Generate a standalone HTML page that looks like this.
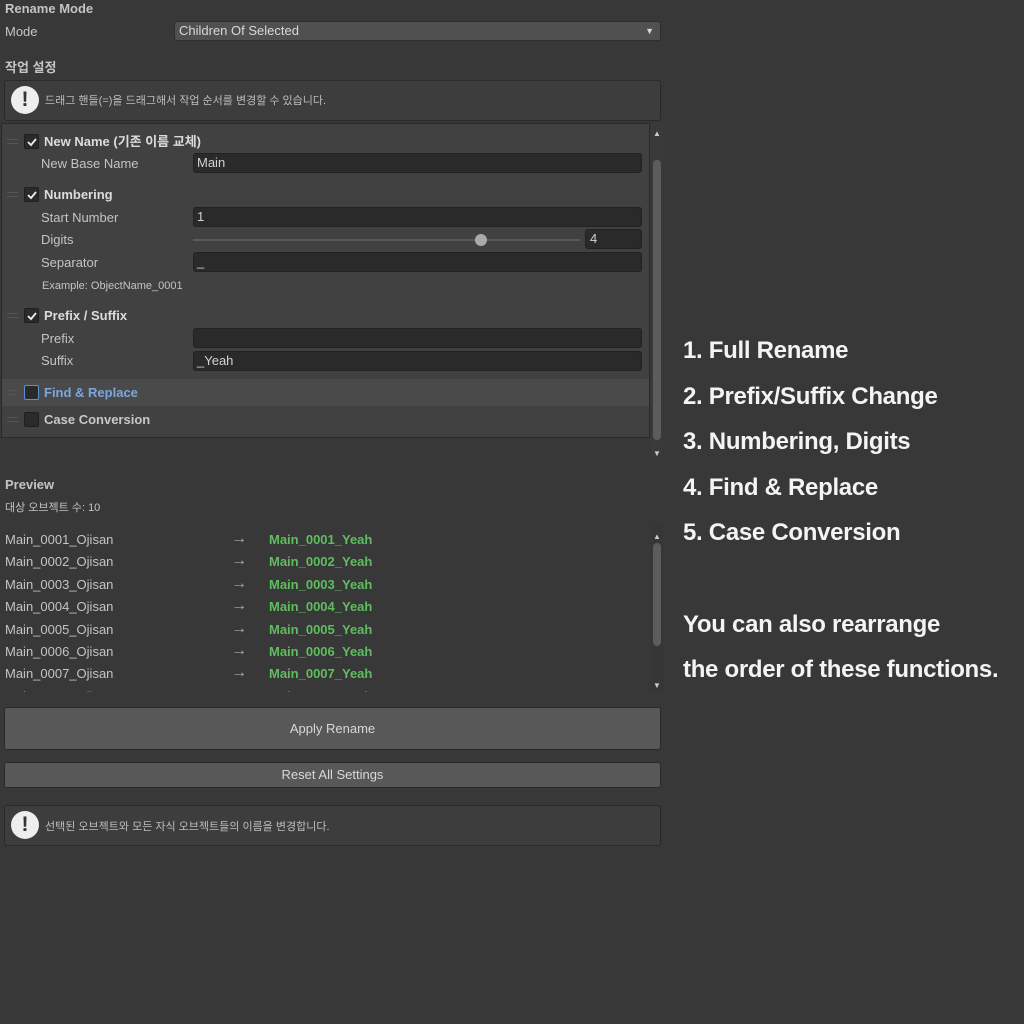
<!DOCTYPE html>
<html><head><meta charset="utf-8"><style>
*{margin:0;padding:0;box-sizing:border-box}
body{width:1024px;height:1024px;background:#383838;font-family:"Liberation Sans","Noto Sans CJK KR",sans-serif;color:#c4c4c4;font-size:13px;line-height:16px;position:relative;overflow:hidden}
.a{position:absolute;white-space:nowrap}
.b{font-weight:bold}
.fld{position:absolute;background:#2a2a2a;border:1px solid #222;border-radius:3px;height:20px;padding-left:3px;line-height:18px;color:#d2d2d2}
.cb{position:absolute;width:15px;height:15px;background:#2a2a2a;border:1px solid #1f1f1f;border-radius:2px}
.cb svg{position:absolute;left:1px;top:1px}
.h{position:absolute;width:11px;height:5px;border-top:1px solid #555;border-bottom:1px solid #555}
.help{position:absolute;left:4px;width:657px;background:#3d3d3d;border:1px solid #2a2a2a;border-radius:3px}
.ic{position:absolute;left:6px;width:28px;height:28px;background:#eee;border-radius:50%}
.ic:after{content:"!";position:absolute;left:0;right:0;top:3px;text-align:center;color:#333;font-weight:bold;font-size:21px;line-height:22px}
.btn{position:absolute;left:4px;width:657px;background:#585858;border:1px solid #2a2a2a;border-radius:3px;text-align:center;color:#d8d8d8}
.r{font-size:24px;line-height:28px;font-weight:bold;color:#f4f4f4;letter-spacing:-0.3px}
.g{color:#5fbd5f;font-weight:bold}
.arr{font-size:16px}
</style></head><body>
<div class="a b" style="left:5px;top:1px">Rename Mode</div>
<div class="a" style="left:5px;top:24px">Mode</div>
<div class="a" style="left:174px;top:21px;width:487px;height:20px;background:#505050;border:1px solid #2e2e2e;border-radius:3px;padding-left:4px;line-height:18px;color:#d8d8d8">Children Of Selected<span style="position:absolute;right:6px;top:0;font-size:9px">▼</span></div>
<div class="a b" style="left:5px;top:60px">작업 설정</div>
<div class="help" style="top:80px;height:41px"><div class="ic" style="top:5px"></div><div class="a" style="left:40px;top:12px;font-size:11px;color:#bdbdbd">드래그 핸들(=)을 드래그해서 작업 순서를 변경할 수 있습니다.</div></div>

<div class="a" style="left:1px;top:123px;width:649px;height:315px;background:#414141;border:1px solid #2a2a2a"></div>
<div class="a" style="left:651px;top:123px;width:12px;height:333px;background:#3a3a3a"></div>
<div class="a" style="left:653px;top:160px;width:8px;height:280px;background:#5c5c5c;border-radius:4px"></div>
<div class="a" style="left:653px;top:126px;font-size:8px;color:#ccc">▲</div>
<div class="a" style="left:653px;top:446px;font-size:8px;color:#ccc">▼</div>

<div class="h" style="left:7px;top:139px"></div>
<div class="cb" style="left:24px;top:134px"><svg width="12" height="12"><path d="M2 6l3 3 5-6" stroke="#eee" stroke-width="1.8" fill="none"/></svg></div>
<div class="a b" style="left:44px;top:134px;color:#dcdcdc">New Name (기존 이름 교체)</div>
<div class="a" style="left:41px;top:156px">New Base Name</div>
<div class="fld" style="left:193px;top:153px;width:449px">Main</div>

<div class="h" style="left:7px;top:192px"></div>
<div class="cb" style="left:24px;top:187px"><svg width="12" height="12"><path d="M2 6l3 3 5-6" stroke="#eee" stroke-width="1.8" fill="none"/></svg></div>
<div class="a b" style="left:44px;top:187px;color:#dcdcdc">Numbering</div>
<div class="a" style="left:41px;top:210px">Start Number</div>
<div class="fld" style="left:193px;top:207px;width:449px">1</div>
<div class="a" style="left:41px;top:232px">Digits</div>
<div class="a" style="left:193px;top:239px;width:387px;height:2px;background:#5a5a5a"></div>
<div class="a" style="left:475px;top:234px;width:12px;height:12px;border-radius:50%;background:#aaa"></div>
<div class="fld" style="left:585px;top:229px;width:57px;padding-left:4px">4</div>
<div class="a" style="left:41px;top:255px">Separator</div>
<div class="fld" style="left:193px;top:252px;width:449px">_</div>
<div class="a" style="left:42px;top:278px;font-size:11px">Example: ObjectName_0001</div>

<div class="h" style="left:7px;top:313px"></div>
<div class="cb" style="left:24px;top:308px"><svg width="12" height="12"><path d="M2 6l3 3 5-6" stroke="#eee" stroke-width="1.8" fill="none"/></svg></div>
<div class="a b" style="left:44px;top:308px;color:#dcdcdc">Prefix / Suffix</div>
<div class="a" style="left:41px;top:331px">Prefix</div>
<div class="fld" style="left:193px;top:328px;width:449px"></div>
<div class="a" style="left:41px;top:353px">Suffix</div>
<div class="fld" style="left:193px;top:351px;width:449px">_Yeah</div>

<div class="a" style="left:2px;top:379px;width:647px;height:27px;background:#4a4a4a"></div>
<div class="h" style="left:7px;top:390px"></div>
<div class="cb" style="left:24px;top:385px;border-color:#5b8fd0"></div>
<div class="a b" style="left:44px;top:385px;color:#7ba6de">Find &amp; Replace</div>
<div class="h" style="left:7px;top:417px"></div>
<div class="cb" style="left:24px;top:412px"></div>
<div class="a b" style="left:44px;top:412px;color:#c8c8c8">Case Conversion</div>

<div class="a b" style="left:5px;top:477px">Preview</div>
<div class="a" style="left:5px;top:500px;font-size:11px">대상 오브젝트 수: 10</div>
<div class="a" style="left:0;top:526px;width:664px;height:166px;overflow:hidden">
<div class="a" style="left:651px;top:0;width:12px;height:166px;background:#363636"></div>
<div class="a" style="left:653px;top:17px;width:8px;height:103px;background:#5c5c5c;border-radius:4px"></div>
<div class="a" style="left:653px;top:3px;font-size:8px;color:#ccc">▲</div>
<div class="a" style="left:653px;top:152px;font-size:8px;color:#ccc">▼</div>
<div class="a" style="left:5px;top:3px;line-height:22.4px">Main_0001_Ojisan<br>Main_0002_Ojisan<br>Main_0003_Ojisan<br>Main_0004_Ojisan<br>Main_0005_Ojisan<br>Main_0006_Ojisan<br>Main_0007_Ojisan<br>Main_0008_Ojisan</div>
<div class="a arr" style="left:231px;top:2px;line-height:22.4px;color:#aaa">→<br>→<br>→<br>→<br>→<br>→<br>→<br>→</div>
<div class="a g" style="left:269px;top:3px;line-height:22.4px">Main_0001_Yeah<br>Main_0002_Yeah<br>Main_0003_Yeah<br>Main_0004_Yeah<br>Main_0005_Yeah<br>Main_0006_Yeah<br>Main_0007_Yeah<br>Main_0008_Yeah</div>
</div>

<div class="btn" style="top:707px;height:43px;line-height:41px">Apply Rename</div>
<div class="btn" style="top:762px;height:26px;line-height:24px">Reset All Settings</div>
<div class="help" style="top:805px;height:41px"><div class="ic" style="top:5px"></div><div class="a" style="left:40px;top:13px;font-size:11px;color:#bdbdbd">선택된 오브젝트와 모든 자식 오브젝트들의 이름을 변경합니다.</div></div>

<div class="a r" style="left:683px;top:337px">1. Full Rename</div>
<div class="a r" style="left:683px;top:383px">2. Prefix/Suffix Change</div>
<div class="a r" style="left:683px;top:428px">3. Numbering, Digits</div>
<div class="a r" style="left:683px;top:474px">4. Find &amp; Replace</div>
<div class="a r" style="left:683px;top:519px">5. Case Conversion</div>
<div class="a r" style="left:683px;top:611px">You can also rearrange</div>
<div class="a r" style="left:683px;top:656px">the order of these functions.</div>
</body></html>
